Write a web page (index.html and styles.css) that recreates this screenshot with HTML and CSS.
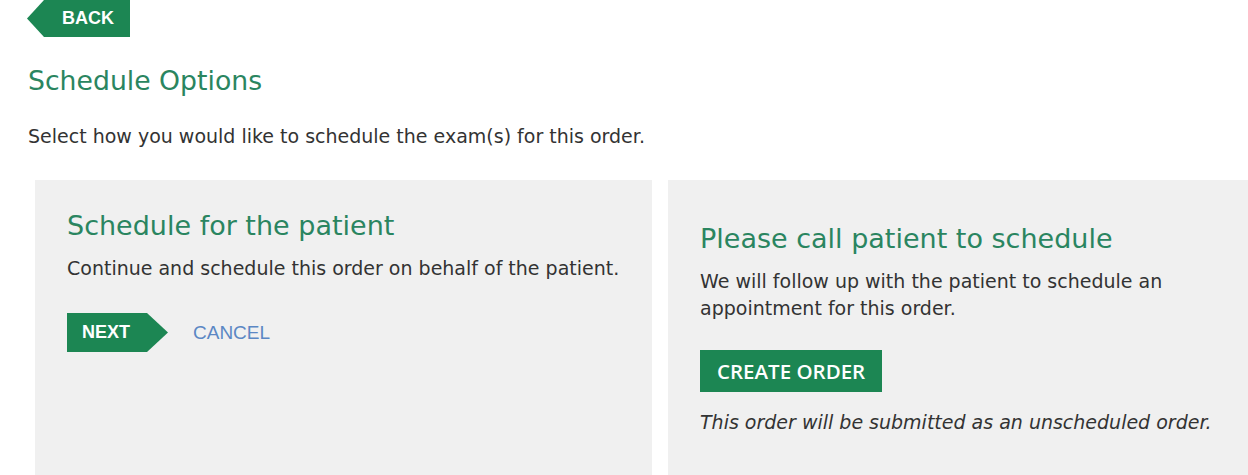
FILE: index.html
```html
<!DOCTYPE html>
<html>
<head>
<meta charset="utf-8">
<link rel="stylesheet" href="styles.css">
</head>
<body>
<div class="page">
  <a class="btn-back">BACK</a>
  <h1 class="page-title">Schedule Options</h1>
  <p class="intro">Select how you would like to schedule the exam(s) for this order.</p>
  <div class="cards">
    <div class="card card-left">
      <h2 class="card-title">Schedule for the patient</h2>
      <p class="card-text">Continue and schedule this order on behalf of the patient.</p>
      <div class="actions">
        <a class="btn-next">NEXT</a>
        <a class="link-cancel">CANCEL</a>
      </div>
    </div>
    <div class="card card-right">
      <h2 class="card-title">Please call patient to schedule</h2>
      <p class="card-text wrap">We will follow up with the patient to schedule an appointment for this order.</p>
      <a class="btn-create">CREATE ORDER</a>
      <p class="note">This order will be submitted as an unscheduled order.</p>
    </div>
  </div>
</div>
</body>
</html>
```
FILE: styles.css
```css
html, body { margin: 0; padding: 0; background: #fff; }
body { font-family: "DejaVu Sans", Verdana, sans-serif; color: #333; overflow: hidden; }
.page { padding-left: 27px; }
.btn-back {
  display: inline-flex; align-items: center;
  height: 37px; padding: 0 16px 0 35px;
  background: #1c8653; color: #fff;
  font-family: "Liberation Sans", Arial, sans-serif; font-weight: bold; font-size: 18px;
  clip-path: polygon(17px 0, 100% 0, 100% 100%, 17px 100%, 0 50%);
}
.page-title {
  margin: 28px 0 0 1px; font-weight: normal; font-size: 26.7px; color: #2a8560; line-height: 32px;
}
.intro { margin: 28px 0 0 1px; font-size: 19px; line-height: 22px; }
.cards { display: flex; gap: 16px; margin: 33px 0 0 8px; }
.card { background: #f0f0f0; height: 300px; flex: 0 0 617px; box-sizing: border-box; padding-left: 32px; }
.card-left { padding-top: 30px; }
.card-right { padding-top: 43px; flex-basis: 620px; }
.card-title { margin: 0; font-weight: normal; font-size: 27px; line-height: 32px; color: #2a8560; }
.card-text { margin: 13px 0 0; font-size: 19px; line-height: 27px; }
.wrap { max-width: 480px; margin-top: 13px; }
.actions { display: flex; align-items: center; margin-top: 31px; }
.btn-next {
  display: inline-flex; align-items: center; height: 39px; box-sizing: border-box;
  width: 101px; padding-left: 15px;
  background: #1c8653; color: #fff;
  font-family: "Liberation Sans", Arial, sans-serif; font-weight: bold; font-size: 18px;
  clip-path: polygon(0 0, 80px 0, 100% 50%, 80px 100%, 0 100%);
}
.link-cancel { margin-left: 25px; color: #5b87c4; font-family: "Liberation Sans", Arial, sans-serif; font-size: 19px; }
.btn-create {
  display: inline-flex; align-items: center; margin-top: 28px;
  height: 42px; padding: 0 17px; background: #1c8653; color: #fff;
  font-family: "Open Sans", sans-serif; font-weight: 600; font-size: 20.5px;
}
.note { margin: 18px 0 0; font-style: italic; font-size: 19px; line-height: 24px; }
```
